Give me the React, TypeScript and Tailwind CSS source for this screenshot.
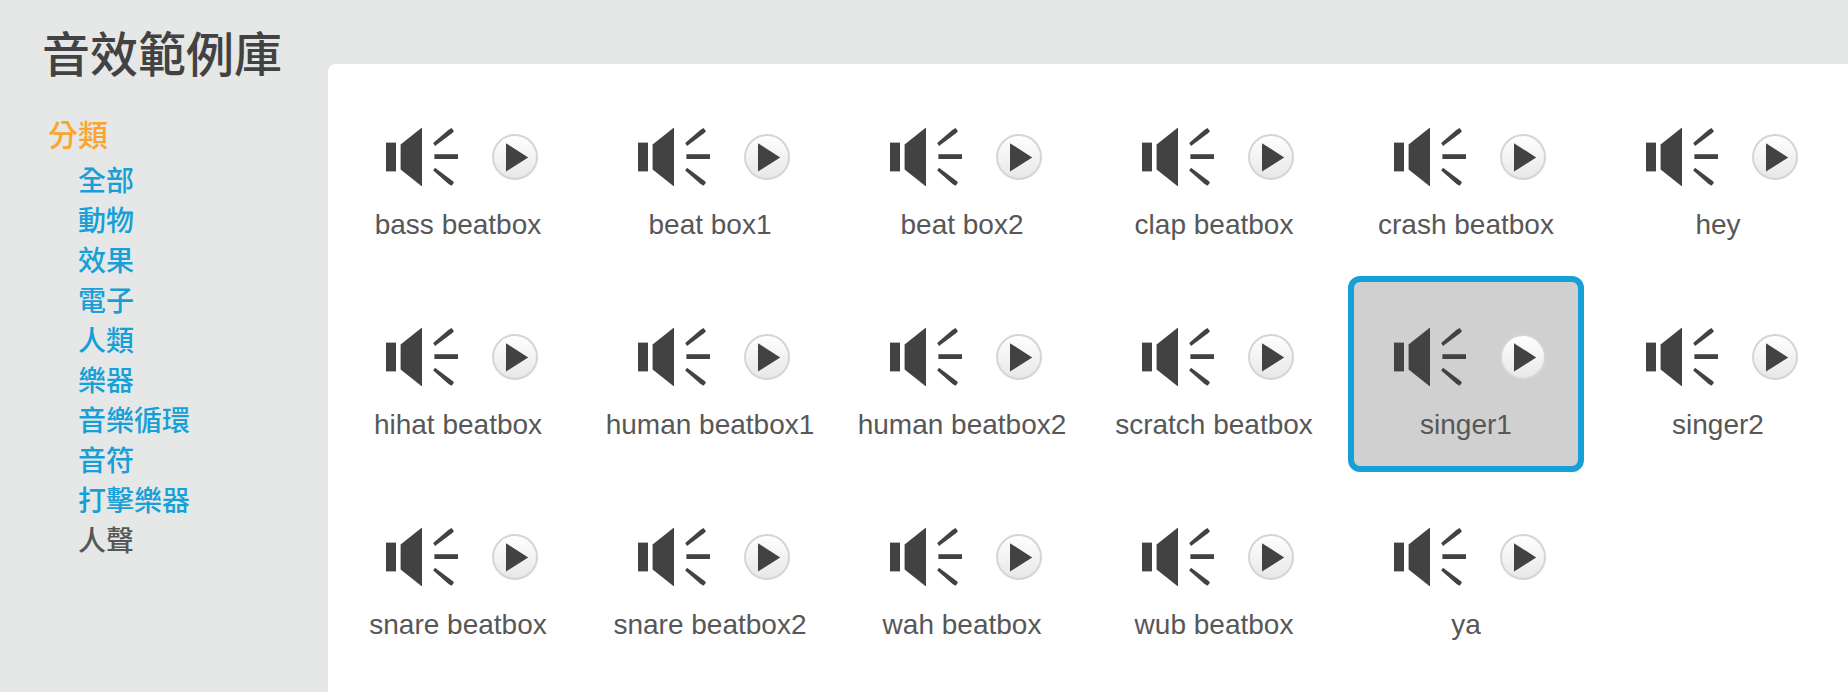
import { useState } from "react";

const categories = ["全部", "動物", "效果", "電子", "人類", "樂器", "音樂循環", "音符", "打擊樂器", "人聲"];

const sounds = [
  "bass beatbox",
  "beat box1",
  "beat box2",
  "clap beatbox",
  "crash beatbox",
  "hey",
  "hihat beatbox",
  "human beatbox1",
  "human beatbox2",
  "scratch beatbox",
  "singer1",
  "singer2",
  "snare beatbox",
  "snare beatbox2",
  "wah beatbox",
  "wub beatbox",
  "ya",
];

function SpeakerIcon() {
  return (
    <svg width="72" height="58" viewBox="0 0 72 58" fill="#424242" aria-hidden="true">
      <rect x="0" y="14.6" width="10" height="28.8" />
      <path d="M14.6 16.5 L36 -0.5 V58.5 L14.6 41.5 Z" />
      <path d="M47.2 15 L62.6 1.8 L65.6 0 L68 3.2 L66 5.2 L49 18 Z" />
      <rect x="48.4" y="26.2" width="23.6" height="4.8" />
      <path d="M47.2 42.6 L49 39.8 L66 52.6 L68 54.6 L65.6 57.8 L62.6 56 Z" />
    </svg>
  );
}

function PlayIcon() {
  return (
    <svg width="46" height="46" viewBox="0 0 46 46" aria-hidden="true">
      <defs>
        <linearGradient id="play-face" x1="0" y1="0" x2="0" y2="1">
          <stop offset="0" stopColor="#ffffff" />
          <stop offset="1" stopColor="#e6e7e8" />
        </linearGradient>
      </defs>
      <circle cx="23" cy="23" r="22" fill="url(#play-face)" stroke="#d4d5d6" strokeWidth="2" />
      <path d="M14 9.2 L36.2 23.4 L14 37.6 Z" fill="#424242" />
    </svg>
  );
}

type SoundTileProps = { name: string; selected: boolean; onSelect: () => void };

function SoundTile({ name, selected, onSelect }: SoundTileProps) {
  return (
    <li
      onClick={onSelect}
      className={`flex h-49 flex-col items-center rounded-xl border-6 pt-[46px] ${
        selected ? "border-[#179fd7] bg-[#d0d0d0]" : "border-transparent"
      }`}
    >
      <div className="flex items-center gap-[34px] pl-2">
        <SpeakerIcon />
        <button type="button" aria-label={`play ${name}`} className="cursor-pointer rounded-full">
          <PlayIcon />
        </button>
      </div>
      <button type="button" aria-pressed={selected} className="mt-[21px] cursor-pointer text-[28px] leading-9 whitespace-nowrap text-[#575757]">
        {name}
      </button>
    </li>
  );
}

export default function App() {
  const [category, setCategory] = useState("人聲");
  const [selected, setSelected] = useState("singer1");

  return (
    <div className="flex min-h-screen bg-[#e6e8e7] font-['Liberation_Sans','Noto_Sans_CJK_TC',sans-serif]">
      <aside className="w-82 shrink-0 pt-[21px] pl-[42px]">
        <h1 className="text-[48px] leading-[70px] font-medium text-[#424242]">音效範例庫</h1>
        <nav aria-labelledby="category-title" className="mt-[23px] pl-1.5">
          <h2 id="category-title" className="text-[30px] leading-[44px] font-medium text-[#fba42e]">
            分類
          </h2>
          <ul className="mt-1 pl-[30px] text-[28px] leading-10 font-medium">
            {categories.map((item) => (
              <li key={item}>
                <a
                  href="#"
                  onClick={(event) => {
                    event.preventDefault();
                    setCategory(item);
                  }}
                  aria-current={item === category ? "true" : undefined}
                  className={item === category ? "text-[#575757]" : "text-[#179fd7]"}
                >
                  {item}
                </a>
              </li>
            ))}
          </ul>
        </nav>
      </aside>
      <main className="mt-16 min-w-0 flex-1 rounded-tl-lg bg-white p-3">
        <ul className="grid grid-cols-6 gap-x-4 gap-y-1">
          {sounds.map((name) => (
            <SoundTile key={name} name={name} selected={name === selected} onSelect={() => setSelected(name)} />
          ))}
        </ul>
      </main>
    </div>
  );
}
